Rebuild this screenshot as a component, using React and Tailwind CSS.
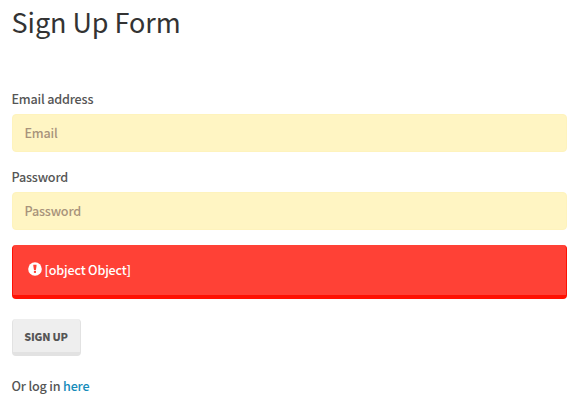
import React from "react";

function Field({ label, type, placeholder }) {
  return (
    <label className="mb-[15px] block">
      <span className="-ml-[0.5px] mb-[5px] block h-5 leading-5">{label}</span>
      <input
        type={type}
        placeholder={placeholder}
        className="block h-[38px] w-full rounded-[4px] border border-[#fef3bd] bg-[#fff5c3] px-[11.5px] pb-[2px] tracking-[-0.19px] outline-none placeholder:text-[#a8937b] placeholder:opacity-100"
      />
    </label>
  );
}

function ExclamationSign() {
  return (
    <svg viewBox="0 0 14 14" className="mr-[3px] mb-[3px] -ml-[0.5px] h-[14px] w-[14px]" aria-hidden="true">
      <circle cx="7" cy="7" r="6.8" fill="#fff" />
      <path d="M5.3 2.7h3.2v1.4L7.9 7.9H6L5.3 4.1z" fill="#ff4136" />
      <path d="M5.9 8.8h2.1v2.1H5.9z" fill="#ff4136" />
    </svg>
  );
}

export default function App() {
  return (
    <main className="h-[404px] overflow-hidden bg-white pr-[11px] pl-3 font-['Noto_Sans_CJK_SC','Noto_Sans',sans-serif] text-[12.6px] font-medium tracking-[-0.19px] text-[#555]">
      <h1 className="-ml-[0.5px] mb-[46px] h-[43px] text-[27px] leading-[43px] font-normal tracking-[-0.06px] text-[#333]">Sign Up Form</h1>
      <form>
        <Field label="Email address" type="email" placeholder="Email" />
        <Field label="Password" type="password" placeholder="Password" />
        <div className="mb-5 flex h-[54px] items-center rounded-[4px] border-x border-b-4 border-[#ff1103] bg-[#ff4136] pt-px pl-[15px] text-white">
          <ExclamationSign />
          <span>[object Object]</span>
        </div>
        <button
          type="button"
          className="block h-[37px] w-[69px] rounded-[4px] border-x border-b-4 border-[#e2e2e2] bg-[#eee] pt-px pr-[1px] text-[10.8px] font-black tracking-[-0.2px] text-[#555]"
        >
          SIGN UP
        </button>
      </form>
      <p className="-ml-[0.5px] mt-5 leading-5">
        Or log in <a href="#login" className="text-[#158cba]">here</a>
      </p>
    </main>
  );
}
